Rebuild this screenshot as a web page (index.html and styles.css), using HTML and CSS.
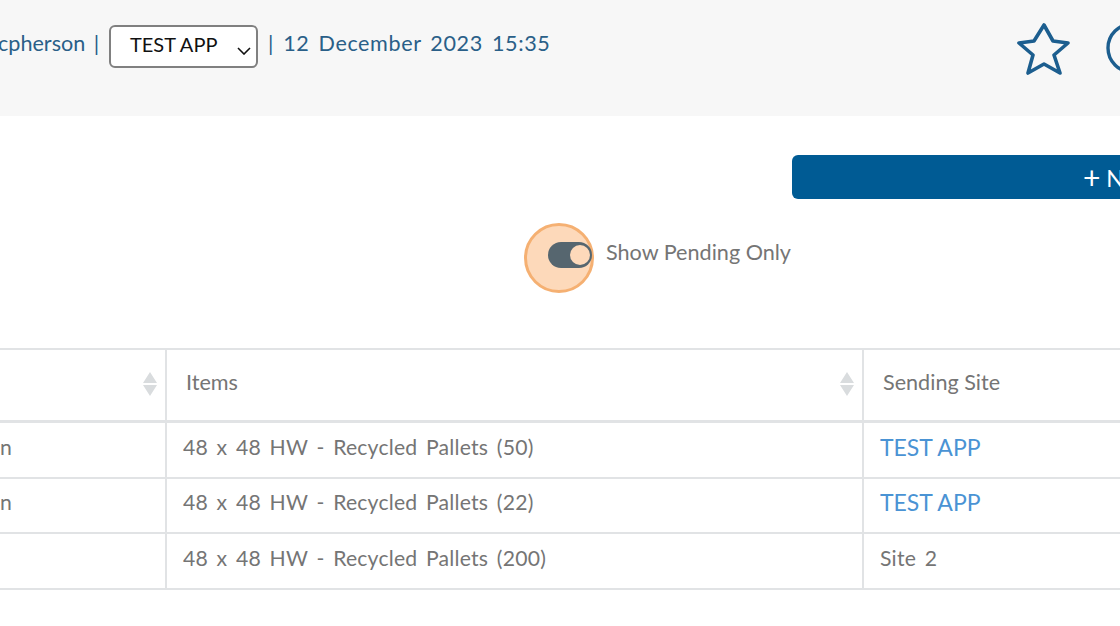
FILE: index.html
```html
<!DOCTYPE html>
<html lang="en">
<head>
<meta charset="utf-8">
<title>Transfers</title>
<link rel="stylesheet" href="styles.css">
</head>
<body>
<header class="topbar">
  <span class="user">cpherson |</span>
  <div class="site-select"><span>TEST APP</span>
    <svg class="chev" width="14" height="8" viewBox="0 0 14 8"><path d="M1 1l6 6 6-6" fill="none" stroke="#111" stroke-width="1.6"/></svg>
  </div>
  <span class="date">| 12 December 2023 15:35</span>
  <svg class="star" width="56" height="54" viewBox="0 0 56 54"><path d="M28 4l9 16 15 2-14 12 6 18-16-9-16 9 5-18L3 22l15-2z" fill="none" stroke="#1c5e8f" stroke-width="3.6" stroke-linejoin="round"/></svg>
  <svg class="circle-btn" width="14" height="52" viewBox="0 0 14 52"><circle cx="26" cy="26" r="24" fill="none" stroke="#1c5e8f" stroke-width="3.4"/></svg>
</header>
<main>
  <div class="actions"><button class="new-btn"><span class="plus">+</span> New</button></div>
  <div class="filter">
    <span class="toggle-wrap">
      <span class="highlight"></span>
      <span class="toggle"><span class="knob"></span></span>
    </span>
    <span class="filter-label">Show Pending Only</span>
  </div>
  <div class="table">
    <div class="cell head"><svg class="sort" width="14" height="24" viewBox="0 0 14 24"><path d="M7 0l7 11H0zM0 13h14L7 24z" fill="#d9dcde"/></svg></div>
    <div class="cell head"><span>Items</span><svg class="sort" width="14" height="24" viewBox="0 0 14 24"><path d="M7 0l7 11H0zM0 13h14L7 24z" fill="#d9dcde"/></svg></div>
    <div class="cell head"><span>Sending Site</span></div>

    <div class="cell end">n</div>
    <div class="cell">48 x 48 HW - Recycled Pallets (50)</div>
    <div class="cell"><a href="#">TEST APP</a></div>

    <div class="cell end">n</div>
    <div class="cell">48 x 48 HW - Recycled Pallets (22)</div>
    <div class="cell"><a href="#">TEST APP</a></div>

    <div class="cell end"></div>
    <div class="cell">48 x 48 HW - Recycled Pallets (200)</div>
    <div class="cell">Site 2</div>
  </div>
</main>
</body>
</html>
```
FILE: styles.css
```css
* { box-sizing: border-box; }
html, body { margin: 0; height: 100%; overflow: hidden; background: #fff; }
body { width: 1120px; height: 626px; font-family: Lato, "Noto Sans", sans-serif; font-size: 21.6px; color: #757575; }

.topbar { height: 116px; background: #f7f7f7; display: flex; align-items: flex-start; color: #2a5f88; }
.user { margin: 30px 0 0 -2px; width: 102px; white-space: nowrap; word-spacing: 3px; }
.site-select { margin: 25px 1px 0 9px; width: 149px; height: 43px; background: #fff; border: 2px solid #808080; border-radius: 6px; display: flex; align-items: center; justify-content: space-between; padding: 0 5px 6px 19px; color: #111; font-size: 20px; }
.chev { margin-top: 14px; }
.date { margin: 30px 0 0 9px; white-space: nowrap; letter-spacing: .6px; word-spacing: 3px; }
.star { margin: 21px 0 0 auto; }
.circle-btn { flex: none; margin: 22px 0 0 34px; }

.actions { padding: 39px 0 0 792px; height: 83px; }
.new-btn { display: block; width: 328px; height: 44px; border: 0; border-radius: 6px 0 0 6px; background: #005b94; color: #fff; font: inherit; font-size: 23px; padding: 0 0 0 291px; text-align: left; white-space: nowrap; overflow: hidden; }
.plus { font-size: 30px; line-height: 1; vertical-align: -2px; }

.filter { height: 149px; padding: 43px 0 0 548px; display: flex; align-items: flex-start; gap: 14px; }
.toggle-wrap { position: relative; width: 44px; height: 26px; }
.highlight { position: absolute; left: -24px; top: -19px; width: 70px; height: 70px; border-radius: 50%; background: #fdd9ba; border: 3px solid #f5b072; }
.toggle { position: absolute; inset: 0; background: #56666f; border-radius: 13px; }
.knob { position: absolute; right: 2px; top: 3px; width: 20px; height: 20px; border-radius: 50%; background: #fdd9ba; }
.filter-label { margin-top: -3px; }

.table { display: grid; grid-template-columns: 167px 697px 1fr; border-top: 2px solid #e1e3e5; }
.cell { height: 55.5px; border-bottom: 2px solid #e1e3e5; border-right: 2px solid #e1e3e5; padding: 0 0 6px 16px; display: flex; align-items: center; white-space: nowrap; font-size: 21.2px; letter-spacing: .2px; word-spacing: 3px; }
.cell:nth-child(3n) { border-right: 0; }
.head { position: relative; height: 73px; border-bottom-width: 3px; padding: 0 0 6px 19px; font-size: 21.6px; letter-spacing: 0; word-spacing: 0; }
.end { padding-left: 0; }
.sort { position: absolute; right: 8px; top: 22px; }
a { color: #4a93d4; text-decoration: none; font-size: 23px; letter-spacing: 0; word-spacing: 0; }
```
